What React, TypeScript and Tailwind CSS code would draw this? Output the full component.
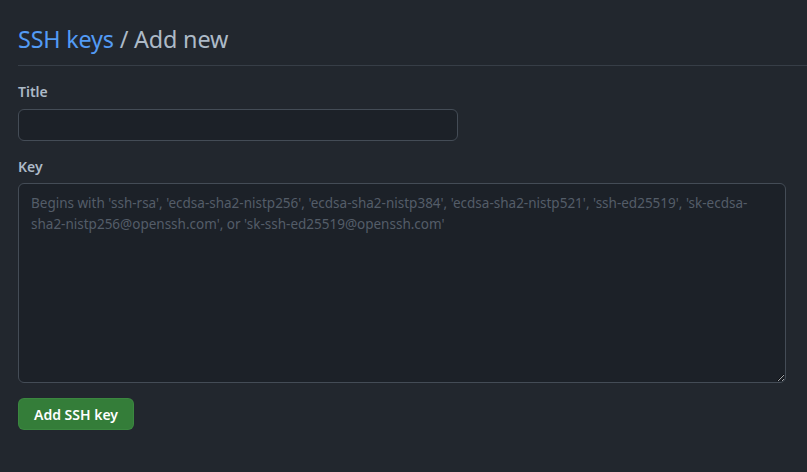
export default function App() {
  return (
    <div
      className="min-h-[472px] bg-[#22272e] pl-[18px] pt-[24px] text-[#adbac7]"
      style={{ fontFamily: '"Noto Sans", "Liberation Sans", sans-serif' }}
    >
      <div className="border-b border-[#373e47] pb-[11px]">
        <h1 className="text-[23.4px] font-normal leading-[30px] tracking-[-0.2px]">
          <a href="#" className="text-[#539bf5]">SSH keys</a> / Add new
        </h1>
      </div>
      <form className="pt-[15px]">
        <label className="block text-[14px] font-semibold leading-[21px]">Title</label>
        <input
          type="text"
          className="mt-[7px] block h-[32px] w-[440px] rounded-md border border-[#444c56] bg-[#1c2128] px-3 text-[14px] outline-none"
        />
        <label className="mt-[15px] block text-[14px] font-semibold leading-[21px]">Key</label>
        <textarea
          className="mt-[6px] block h-[200px] w-[768px] rounded-md border border-[#444c56] bg-[#1c2128] px-3 py-[9px] text-[13.5px] leading-[21px] outline-none placeholder:text-[#545d68]"
          placeholder="Begins with 'ssh-rsa', 'ecdsa-sha2-nistp256', 'ecdsa-sha2-nistp384', 'ecdsa-sha2-nistp521', 'ssh-ed25519', 'sk-ecdsa-sha2-nistp256@openssh.com', or 'sk-ssh-ed25519@openssh.com'"
        />
        <button
          type="button"
          className="mt-[15px] h-[32px] rounded-md border border-[#46954a66] bg-[#347d39] px-[15px] text-[14px] font-semibold text-white"
        >
          Add SSH key
        </button>
      </form>
    </div>
  );
}
